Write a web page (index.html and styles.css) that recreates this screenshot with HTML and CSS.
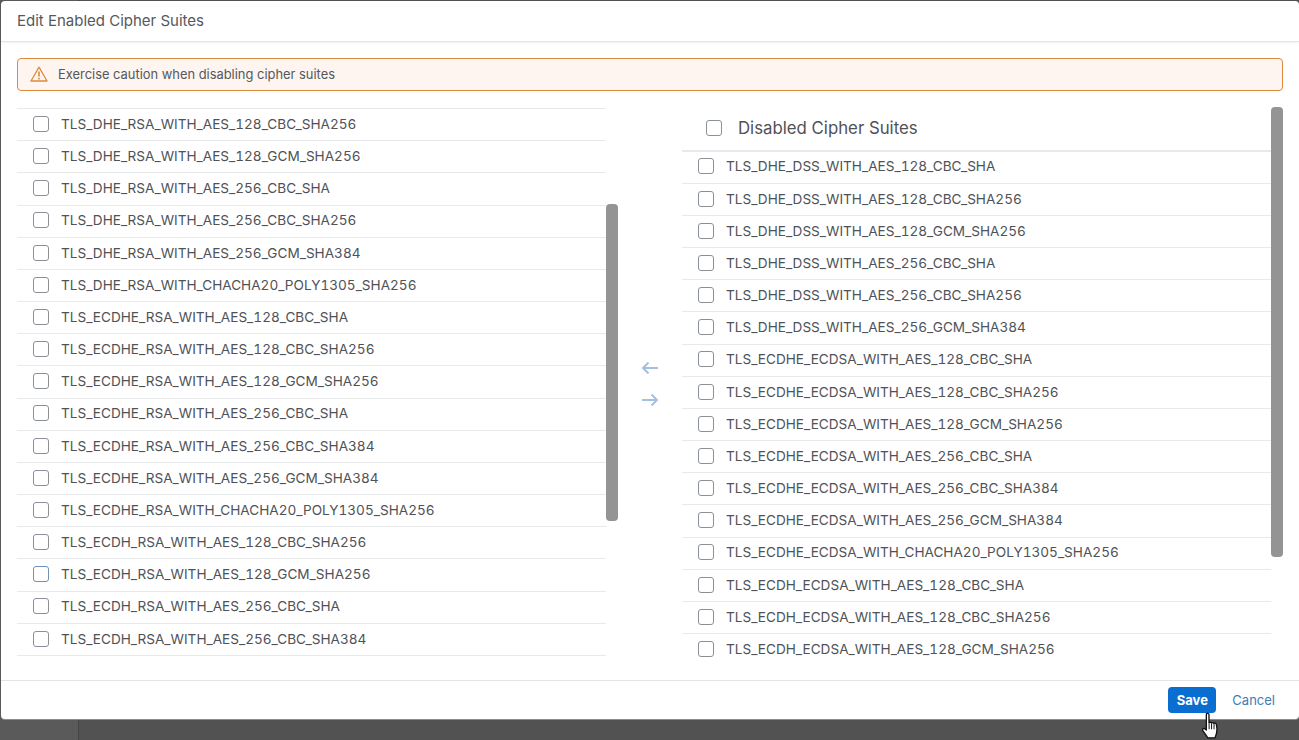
FILE: index.html
```html
<!DOCTYPE html>
<html lang="en">

<head>
    <meta charset="UTF-8">
    <title>Edit Enabled Cipher Suites</title>
    <link rel="stylesheet" href="styles.css">
</head>

<body>
    <div class="backdrop-side"></div>
    <div class="dialog">
        <header class="dialog-header">Edit Enabled Cipher Suites</header>

        <div class="dialog-content">
            <div class="strip">
                <svg class="strip-icon" width="18" height="16" viewBox="0 0 18 16">
                    <path d="M9 1.2 L17 15 H1 Z" fill="none" stroke="#dd8a3c" stroke-width="1.3" stroke-linejoin="round"/>
                    <path d="M9 5.6 V10.6" stroke="#dd8a3c" stroke-width="1.6"/>
                    <path d="M9 11.8 V13.4" stroke="#dd8a3c" stroke-width="1.6"/>
                </svg>
                <span>Exercise caution when disabling cipher suites</span>
            </div>

            <div class="columns">
                <div class="list-col">
                    <ul class="list list-enabled">
                        <li><span class="check"></span>TLS_DHE_RSA_WITH_AES_128_CBC_SHA256</li>
                        <li><span class="check"></span>TLS_DHE_RSA_WITH_AES_128_GCM_SHA256</li>
                        <li><span class="check"></span>TLS_DHE_RSA_WITH_AES_256_CBC_SHA</li>
                        <li><span class="check"></span>TLS_DHE_RSA_WITH_AES_256_CBC_SHA256</li>
                        <li><span class="check"></span>TLS_DHE_RSA_WITH_AES_256_GCM_SHA384</li>
                        <li><span class="check"></span>TLS_DHE_RSA_WITH_CHACHA20_POLY1305_SHA256</li>
                        <li><span class="check"></span>TLS_ECDHE_RSA_WITH_AES_128_CBC_SHA</li>
                        <li><span class="check"></span>TLS_ECDHE_RSA_WITH_AES_128_CBC_SHA256</li>
                        <li><span class="check"></span>TLS_ECDHE_RSA_WITH_AES_128_GCM_SHA256</li>
                        <li><span class="check"></span>TLS_ECDHE_RSA_WITH_AES_256_CBC_SHA</li>
                        <li><span class="check"></span>TLS_ECDHE_RSA_WITH_AES_256_CBC_SHA384</li>
                        <li><span class="check"></span>TLS_ECDHE_RSA_WITH_AES_256_GCM_SHA384</li>
                        <li><span class="check"></span>TLS_ECDHE_RSA_WITH_CHACHA20_POLY1305_SHA256</li>
                        <li><span class="check"></span>TLS_ECDH_RSA_WITH_AES_128_CBC_SHA256</li>
                        <li><span class="check check-blue"></span>TLS_ECDH_RSA_WITH_AES_128_GCM_SHA256</li>
                        <li><span class="check"></span>TLS_ECDH_RSA_WITH_AES_256_CBC_SHA</li>
                        <li><span class="check"></span>TLS_ECDH_RSA_WITH_AES_256_CBC_SHA384</li>
                    </ul>
                    <div class="track"><div class="thumb thumb-left"></div></div>
                </div>

                <div class="arrows">
                    <svg width="18" height="14" viewBox="0 0 18 14">
                        <path d="M17 7 H2 M7.5 1.5 L2 7 L7.5 12.5" fill="none" stroke="#a3c0e2" stroke-width="2"/>
                    </svg>
                    <svg width="18" height="14" viewBox="0 0 18 14">
                        <path d="M1 7 H16 M10.5 1.5 L16 7 L10.5 12.5" fill="none" stroke="#a3c0e2" stroke-width="2"/>
                    </svg>
                </div>

                <div class="list-col">
                    <div class="list-wrap">
                        <div class="list-title"><span class="check"></span>Disabled Cipher Suites</div>
                        <ul class="list">
                            <li><span class="check"></span>TLS_DHE_DSS_WITH_AES_128_CBC_SHA</li>
                            <li><span class="check"></span>TLS_DHE_DSS_WITH_AES_128_CBC_SHA256</li>
                            <li><span class="check"></span>TLS_DHE_DSS_WITH_AES_128_GCM_SHA256</li>
                            <li><span class="check"></span>TLS_DHE_DSS_WITH_AES_256_CBC_SHA</li>
                            <li><span class="check"></span>TLS_DHE_DSS_WITH_AES_256_CBC_SHA256</li>
                            <li><span class="check"></span>TLS_DHE_DSS_WITH_AES_256_GCM_SHA384</li>
                            <li><span class="check"></span>TLS_ECDHE_ECDSA_WITH_AES_128_CBC_SHA</li>
                            <li><span class="check"></span>TLS_ECDHE_ECDSA_WITH_AES_128_CBC_SHA256</li>
                            <li><span class="check"></span>TLS_ECDHE_ECDSA_WITH_AES_128_GCM_SHA256</li>
                            <li><span class="check"></span>TLS_ECDHE_ECDSA_WITH_AES_256_CBC_SHA</li>
                            <li><span class="check"></span>TLS_ECDHE_ECDSA_WITH_AES_256_CBC_SHA384</li>
                            <li><span class="check"></span>TLS_ECDHE_ECDSA_WITH_AES_256_GCM_SHA384</li>
                            <li><span class="check"></span>TLS_ECDHE_ECDSA_WITH_CHACHA20_POLY1305_SHA256</li>
                            <li><span class="check"></span>TLS_ECDH_ECDSA_WITH_AES_128_CBC_SHA</li>
                            <li><span class="check"></span>TLS_ECDH_ECDSA_WITH_AES_128_CBC_SHA256</li>
                            <li class="no-line"><span class="check"></span>TLS_ECDH_ECDSA_WITH_AES_128_GCM_SHA256</li>
                        </ul>
                    </div>
                    <div class="track"><div class="thumb thumb-right"></div></div>
                </div>
            </div>
        </div>

        <footer class="dialog-footer">
            <button class="btn-save" type="button">Save</button>
            <button class="btn-cancel" type="button">Cancel</button>
        </footer>
    </div>

    <svg class="cursor" width="20" height="28" viewBox="0 0 18 26" preserveAspectRatio="none">
        <path d="M5 1.5 C6 .8 7 1.2 7.2 2.5 V10 C8 9.3 9 9.4 9.4 10.2 C10.2 9.5 11.2 9.7 11.6 10.6 C12.4 10 13.6 10.4 13.8 11.5 C14.4 14 14.6 17 14 19.5 C13.6 21.5 13 22.6 12.6 24 H6 C5.2 22 3.5 20 1.8 17.5 C1 16.2 1.6 15 3 15.4 L4.8 16.8 V2.6 Z" fill="#fff" stroke="#111" stroke-width="1.2" stroke-linejoin="round"/>
        <path d="M7.3 10.5 V16 M9.5 10.5 V16 M11.7 11 V16" stroke="#111" stroke-width="0.9"/>
    </svg>
</body>

</html>
```

FILE: styles.css
```css
* {
    box-sizing: border-box;
}

html,
body {
    height: 740px;
    overflow: hidden;
}

body {
    margin: 0;
    padding: 1px 0 0 1px;
    background-color: #525252;
    font-family: Inter, Arial, sans-serif;
    color: #4f5257;
}

.backdrop-side {
    position: absolute;
    left: 0;
    top: 0;
    width: 79px;
    height: 740px;
    background-color: #5a5a5a;
    border-right: 1px solid #444;
}

.dialog {
    position: relative;
    display: flex;
    flex-direction: column;
    width: 1298px;
    height: 718px;
    background-color: #fff;
    border-radius: 4px;
    box-shadow: 0 1px 0 #8c8c8c;
}

.dialog-header {
    height: 41px;
    padding-left: 16px;
    line-height: 40px;
    font-size: 15px;
    color: #55585c;
    border-bottom: 1px solid #e3e4e6;
    box-shadow: 0 1px 2px rgba(0, 0, 0, 0.06);
}

.dialog-content {
    flex: 1;
    padding: 16px 16px 0;
    overflow: hidden;
}

.strip {
    display: flex;
    align-items: center;
    gap: 10px;
    height: 33px;
    padding: 0 0 1px 12px;
    font-size: 12.9px;
    color: #55585c;
    background-color: #fef5f0;
    border: 1px solid #dd8a3c;
    border-radius: 4px;
}

.columns {
    display: flex;
    height: 557px;
    margin-top: 16px;
}

.list-col {
    display: flex;
    flex: 1;
    min-width: 0;
}

.list-wrap {
    flex: 1;
    min-width: 0;
}

.list {
    margin: 0;
    padding: 0;
    list-style: none;
}

.list-enabled {
    flex: 1;
    min-width: 0;
    margin-top: 1px;
    border-top: 1px solid #e8e9ea;
}

.list li {
    display: flex;
    align-items: center;
    gap: 12px;
    height: 32.18px;
    padding: 0 0 1.5px 16px;
    font-size: 13.6px;
    font-variant-numeric: tabular-nums;
    white-space: nowrap;
    border-bottom: 1px solid #e8e9ea;
}

.list li.no-line {
    border-bottom: none;
}

.check {
    flex: none;
    width: 16px;
    height: 16px;
    background-color: #fff;
    border: 1px solid #8a9098;
    border-radius: 3px;
}

.check-blue {
    border-color: #6f93b8;
}

.list-title {
    display: flex;
    align-items: center;
    gap: 16px;
    height: 44.5px;
    padding-left: 24px;
    font-size: 16.8px;
    border-bottom: 2px solid #e8e9ea;
}

.track {
    flex: none;
    width: 12px;
}

.thumb {
    background-color: #949494;
    border-radius: 4px;
}

.thumb-left {
    height: 317px;
    margin-top: 97px;
}

.thumb-right {
    height: 450px;
}

.arrows {
    display: flex;
    flex: none;
    flex-direction: column;
    align-items: center;
    justify-content: center;
    gap: 18px;
    width: 64px;
    padding-bottom: 3px;
}

.dialog-footer {
    display: flex;
    align-items: center;
    justify-content: flex-end;
    height: 39px;
    padding-right: 24px;
    border-top: 1px solid #e3e4e6;
}

.btn-save {
    width: 48px;
    height: 26px;
    padding: 0;
    font: 700 13px Inter, Arial, sans-serif;
    color: #fff;
    background-color: #0a6ed1;
    border: none;
    border-radius: 4px;
}

.btn-cancel {
    margin-left: 16px;
    padding: 0;
    font: 13px Inter, Arial, sans-serif;
    color: #3f7cb8;
    background: none;
    border: none;
}

.cursor {
    position: absolute;
    left: 1201px;
    top: 712px;
}
```
